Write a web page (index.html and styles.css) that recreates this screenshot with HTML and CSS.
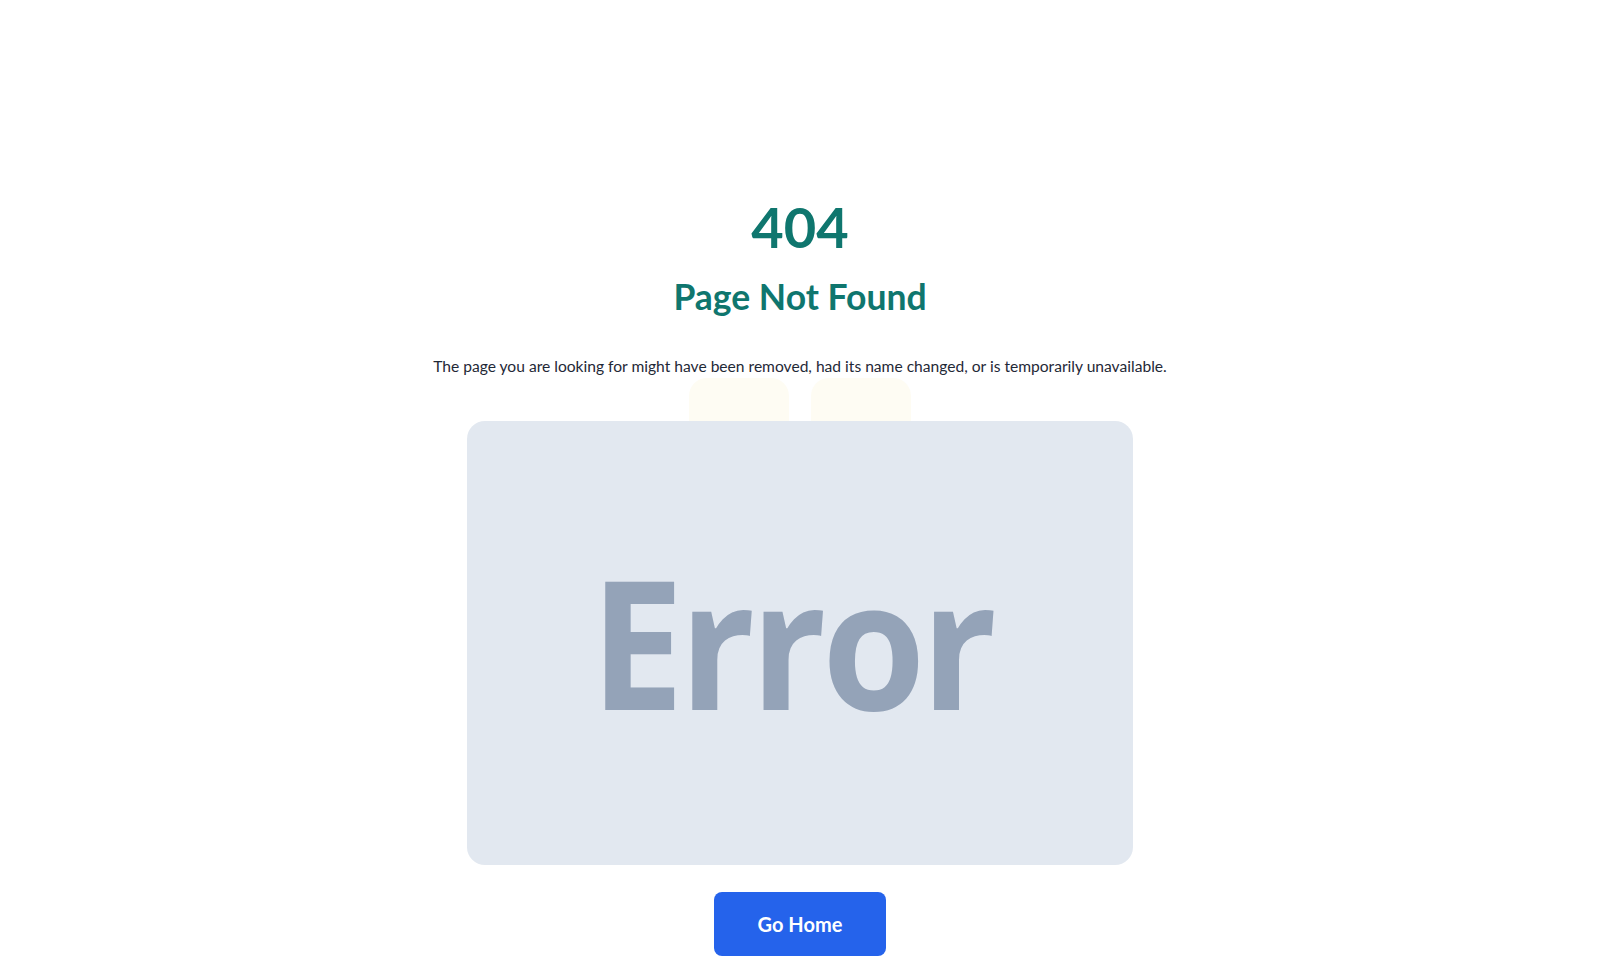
FILE: index.html
```html
<!DOCTYPE html>
<html>
<head>
    <title>404 - Page Not Found</title>
    <meta name="viewport" content="width=device-width, initial-scale=1.0">
    <link rel="stylesheet" href="styles.css">
</head>
<body>
    <main class="not-found">
        <h1 class="code">404</h1>
        <h2 class="title">Page Not Found</h2>
        <p class="message">The page you are looking for might have been removed, had its name changed, or is temporarily unavailable.</p>

        <div class="picture-wrap">
            <div class="blob blob-left"></div>
            <div class="blob blob-right"></div>
            <div class="picture"><span>Error</span></div>
        </div>

        <a class="home-btn" href="#">Go Home</a>
    </main>
</body>
</html>
```

FILE: styles.css
```css
body {margin: 0; background: #ffffff; font-family: "Lato", "Noto Sans", sans-serif; color: #1f2937;}
.not-found {display: flex; flex-direction: column; align-items: center; padding-top: 197px; text-align: center;}
.code {margin: 0; font-size: 56px; line-height: 60px; font-weight: 700; color: #0f766e;}
.title {margin: 19px 0 0; font-size: 35.5px; line-height: 42px; font-weight: 700; color: #0f766e;}
.message {margin: 36px 0 0; font-size: 15.6px; line-height: 24px;}
.picture-wrap {position: relative; padding-top: 43px;}
.blob {position: absolute; top: 0; width: 100px; height: 80px; border-radius: 18px; background: #fefcf3;}
.blob-left {left: 222px;}
.blob-right {left: 344px;}
.picture {position: relative; width: 666px; height: 444px; border-radius: 18px; background: #e2e8f0; display: flex; align-items: center; justify-content: center;}
.picture span {font-family: "Open Sans", sans-serif; font-weight: 700; font-size: 180px; letter-spacing: -5px; transform: scaleX(0.93); color: #94a3b8; line-height: 1; margin: -4px 17px 0 0;}
.home-btn {margin-top: 27px; display: block; width: 172px; height: 64px; line-height: 64px; border-radius: 8px; background: #2563eb; color: #ffffff; font-size: 20px; font-weight: 700; text-decoration: none;}
```
